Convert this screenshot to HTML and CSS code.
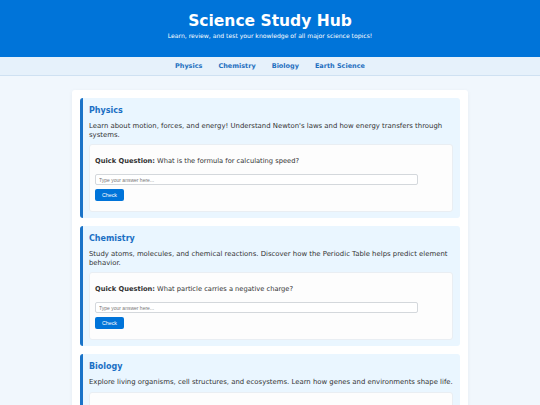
FILE: index.html
```html
<!DOCTYPE html>
<html lang="en">
<head>
  <meta charset="UTF-8" />
  <meta name="viewport" content="width=device-width, initial-scale=1.0"/>
  <title>Science Study Hub</title>
  <link rel="stylesheet" href="styles.css">
</head>
<body>
  <header class="site-header">
    <h1>Science Study Hub</h1>
    <p>Learn, review, and test your knowledge of all major science topics!</p>
  </header>

  <nav class="site-nav">
    <a href="#physics">Physics</a>
    <a href="#chemistry">Chemistry</a>
    <a href="#biology">Biology</a>
    <a href="#earth">Earth Science</a>
  </nav>

  <main class="container">
    <section class="topic" id="physics">
      <h2>Physics</h2>
      <p>Learn about motion, forces, and energy! Understand Newton's laws and how energy transfers through systems.</p>
      <div class="quiz">
        <p><strong>Quick Question:</strong> What is the formula for calculating speed?</p>
        <input type="text" placeholder="Type your answer here...">
        <button>Check</button>
      </div>
    </section>

    <section class="topic" id="chemistry">
      <h2>Chemistry</h2>
      <p>Study atoms, molecules, and chemical reactions. Discover how the Periodic Table helps predict element behavior.</p>
      <div class="quiz">
        <p><strong>Quick Question:</strong> What particle carries a negative charge?</p>
        <input type="text" placeholder="Type your answer here...">
        <button>Check</button>
      </div>
    </section>

    <section class="topic" id="biology">
      <h2>Biology</h2>
      <p>Explore living organisms, cell structures, and ecosystems. Learn how genes and environments shape life.</p>
      <div class="quiz">
        <p><strong>Quick Question:</strong> What is the basic unit of life?</p>
        <input type="text" placeholder="Type your answer here...">
        <button>Check</button>
      </div>
    </section>
  </main>
</body>
</html>
```

FILE: styles.css
```css
body {
  margin: 0;
  font-family: 'DejaVu Sans', Verdana, sans-serif;
  background: #f1f7fd;
  color: #333;
}

/* Header */
.site-header {
  background: #0074d9;
  color: #fff;
  text-align: center;
  padding: 12px 0 17px;
}

.site-header h1 {
  margin: 0 0 1px;
  font-size: 15.5px;
  line-height: 18px;
}

.site-header p {
  margin: 0;
  font-size: 6.1px;
  line-height: 9px;
}

/* Nav */
.site-nav {
  background: #e6f1fb;
  border-bottom: 1px solid #cfe1f2;
  display: flex;
  justify-content: center;
  gap: 16px;
  line-height: 18px;
}

.site-nav a {
  color: #1f6fbf;
  font-weight: bold;
  font-size: 6.5px;
  text-decoration: none;
}

/* Main */
.container {
  width: 396px;
  margin: 14px auto 0;
  background: #fff;
  border-radius: 3px;
  padding: 8px;
  box-sizing: border-box;
  box-shadow: 0 1px 4px rgba(0, 0, 0, 0.05);
}

.topic {
  background: #eaf6ff;
  border-left: 3px solid #1a73c8;
  border-radius: 3px;
  padding: 8px 7px 6px 6px;
  margin-bottom: 8px;
}

.topic h2 {
  margin: 0 0 6px;
  font-size: 8px;
  line-height: 10px;
  color: #1a6fc4;
}

.topic > p {
  margin: 0 0 5px;
  font-size: 6.9px;
  line-height: 8.5px;
}

.quiz {
  background: #fdfdfd;
  border: 1px solid #e9eef3;
  border-radius: 3px;
  padding: 12px 5px 10px;
}

.quiz p {
  margin: 0 0 8.5px;
  font-size: 6.7px;
  line-height: 8.5px;
}

.quiz input {
  display: block;
  width: 323px;
  height: 11px;
  box-sizing: border-box;
  border: 1px solid #d4d8dc;
  border-radius: 2px;
  padding: 0 3px;
  font-family: 'Liberation Sans', Arial, sans-serif;
  font-size: 5px;
  margin: 0 0 4px;
}

.quiz input::placeholder {
  color: #777;
}

.quiz button {
  display: block;
  width: 29px;
  height: 12px;
  padding: 0;
  border: none;
  border-radius: 2px;
  background: #0074d9;
  color: #fff;
  font-family: 'Liberation Sans', Arial, sans-serif;
  font-size: 5.3px;
  cursor: pointer;
}
```
